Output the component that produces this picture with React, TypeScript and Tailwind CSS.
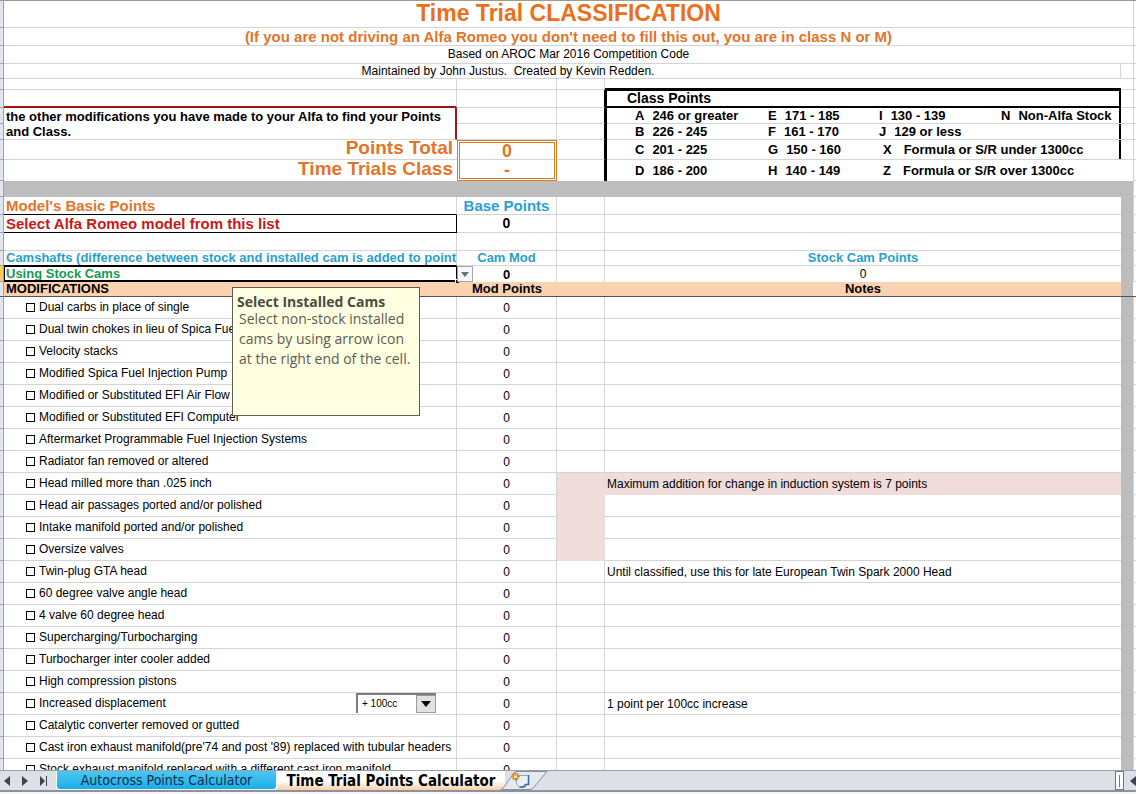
import { useState } from "react";
import type { ReactNode } from "react";

type Mod = { label: string; note?: string; tone?: "full" | "side" };

const mods: Mod[] = [
  { label: "Dual carbs in place of single" },
  { label: "Dual twin chokes in lieu of Spica Fuel Injection" },
  { label: "Velocity stacks" },
  { label: "Modified Spica Fuel Injection Pump" },
  { label: "Modified or Substituted EFI Air Flow Meter" },
  { label: "Modified or Substituted EFI Computer" },
  { label: "Aftermarket Programmable Fuel Injection Systems" },
  { label: "Radiator fan removed or altered" },
  { label: "Head milled more than .025 inch", note: "Maximum addition for change in induction system is 7 points", tone: "full" },
  { label: "Head air passages ported and/or polished", tone: "side" },
  { label: "Intake manifold ported and/or polished", tone: "side" },
  { label: "Oversize valves", tone: "side" },
  { label: "Twin-plug GTA head", note: "Until classified, use this for late European Twin Spark 2000 Head" },
  { label: "60 degree valve angle head" },
  { label: "4 valve 60 degree head" },
  { label: "Supercharging/Turbocharging" },
  { label: "Turbocharger inter cooler added" },
  { label: "High compression pistons" },
  { label: "Increased displacement", note: "1 point per 100cc increase" },
  { label: "Catalytic converter removed or gutted" },
  { label: "Cast iron exhaust manifold(pre'74 and post '89) replaced with tubular headers" },
  { label: "Stock exhaust manifold replaced with a different cast iron manifold" },
];

const classRows = [
  { height: "h-4 border-b", cells: [["A", "246 or greater"], ["E", "171 - 185"], ["I", "130 - 139"], ["N", "Non-Alfa Stock"]] },
  { height: "h-4 border-b", cells: [["B", "226 - 245"], ["F", "161 - 170"], ["J", "129 or less"]] },
  { height: "h-5 border-b", cells: [["C", "201 - 225"], ["G", "150 - 160"], ["X", "Formula or S/R under 1300cc"]] },
  { height: "h-[21px]", cells: [["D", "186 - 200"], ["H", "140 - 149"], ["Z", "Formula or S/R over 1300cc"]] },
];

const line = "border-[#d4d4d4]";
const cell = "border-b border-r border-[#d4d4d4] p-0";

function Row({ height, active, tail = "plain", children }: { height: string; active?: boolean; tail?: "plain" | "gray" | "none"; children?: ReactNode }) {
  return (
    <tr className={height}>
      <th className={`border-b border-r border-[#9aa3af] p-0 ${active ? "bg-[#fbcf5c]" : "bg-[#e1e6ee]"}`} />
      {children}
      {tail === "plain" && <td className={`border-b ${line} p-0`} />}
      {tail === "gray" && <td className="bg-[#bdbdbd] p-0" />}
      {tail === "none" && <td className="p-0" />}
      <td className={`border-b border-l ${line} p-0`} />
    </tr>
  );
}

function ClassPoints() {
  return (
    <div className="border-l-2 border-t border-black font-bold">
      <div className="h-[17px] border-b-2 border-r-2 border-black pl-5 text-sm leading-[15px]">Class Points</div>
      {classRows.map((row, i) => (
        <div
          key={row.cells[0][0]}
          className={`grid grid-cols-[133px_111px_122px_1fr] items-center whitespace-nowrap border-[#d4d4d4] pl-7 text-[13px] leading-[15px] ${row.height} ${i < 3 ? "shadow-[inset_-2px_0_0_#000]" : ""}`}
        >
          {row.cells.map(([letter, range]) => (
            <span key={letter} className={`flex ${letter === "X" || letter === "Z" ? "gap-3 pl-1" : "gap-2"}`}>
              <span>{letter}</span>
              <span>{range}</span>
            </span>
          ))}
        </div>
      ))}
    </div>
  );
}

function CamCell() {
  return (
    <td className="relative p-0">
      <select
        aria-label="Installed cams"
        className="block h-4 w-full appearance-none border border-b-2 border-black bg-white pl-px text-[13px] font-bold leading-[13px] text-[#159a52] outline-none"
      >
        <option>Using Stock Cams</option>
      </select>
      <span className="absolute -bottom-px -right-0.5 size-1 border-l border-t border-white bg-black" />
      <button
        type="button"
        aria-label="Open cam list"
        className="absolute -right-4 top-0 flex h-4 w-4 items-center justify-center border border-[#a3a9b3] bg-[#f6f7f9]"
      >
        <svg viewBox="0 0 8 5" className="h-[5px] w-2" fill="#6b6f76"><path d="M0 0h8L4 5z" /></svg>
      </button>
      <div role="tooltip" className="absolute left-[228px] top-[21px] z-10 h-[129px] w-[188px] border border-[#5f5f52] bg-[#ffffe1] pl-1 pt-1.5 font-['Open_Sans','Noto_Sans',sans-serif] text-sm text-[#5c5c52]">
        <p className="font-bold leading-[15px] text-[#4a4a42]">Select Installed Cams</p>
        <p className="whitespace-nowrap pl-0.5 leading-5">
          Select non-stock installed
          <br />
          cams by using arrow icon
          <br />
          at the right end of the cell.
        </p>
      </div>
    </td>
  );
}

function ModRow({ mod, index }: { mod: Mod; index: number }) {
  const [checked, setChecked] = useState(false);
  const id = `mod-${index}`;
  return (
    <Row height="h-[22px]" tail="gray">
      <td className={cell}>
        <div className="flex h-[21px] items-center whitespace-nowrap pb-px pl-[22px] text-xs">
          <input
            id={id}
            type="checkbox"
            checked={checked}
            onChange={(e) => setChecked(e.target.checked)}
            className="mr-1 size-[9px] shrink-0 appearance-none border border-black checked:bg-black"
          />
          <label htmlFor={id} className="grow">{mod.label}</label>
          {mod.label === "Increased displacement" && (
            <span className="mr-5 flex h-5 w-20 border-l-2 border-t-2 border-[#7d7d7d]">
              <select aria-label="Displacement increase" className="min-w-0 grow appearance-none bg-white pl-1 text-[10px] leading-4 outline-none">
                <option>+ 100cc</option>
              </select>
              <span className="flex w-5 items-center justify-center border border-[#9a9a9a] bg-[#e2e2e2]">
                <svg viewBox="0 0 10 6" className="h-1.5 w-2.5"><path d="M0 0h10L5 6z" /></svg>
              </span>
            </span>
          )}
        </div>
      </td>
      <td className={`${cell} text-center text-xs`}>0</td>
      <td className={mod.tone ? "bg-[#f0dcdb] p-0" : cell} />
      <td className={`whitespace-nowrap border-b p-0 pl-0.5 text-xs ${mod.tone === "full" ? "border-[#f0dcdb] bg-[#f0dcdb]" : line}`}>{mod.note}</td>
    </Row>
  );
}

function SheetTabs() {
  return (
    <footer className="flex h-6 shrink-0 flex-col bg-[#f4f6f8] font-['DejaVu_Sans_Condensed','DejaVu_Sans',sans-serif]">
      <div className="flex h-[22px] border-b-2 border-t border-b-[#8c939e] border-t-[#9b9fa6] bg-[#dce1e7]">
        <nav className="flex w-14 items-center gap-3 pl-1 text-[#3e434b]">
          <button type="button" aria-label="Previous sheet"><svg viewBox="0 0 6 10" className="h-2.5 w-1.5" fill="currentColor"><path d="M6 0v10L0 5z" /></svg></button>
          <button type="button" aria-label="Next sheet"><svg viewBox="0 0 6 10" className="h-2.5 w-1.5" fill="currentColor"><path d="M0 0v10l6-5z" /></svg></button>
          <button type="button" aria-label="Last sheet"><svg viewBox="0 0 8 10" className="h-2.5 w-2" fill="currentColor"><path d="M0 0v10l5-5zM6 0h1v10H6z" /></svg></button>
        </nav>
        <button type="button" className="w-[221px] rounded-b-sm border border-t-0 border-white bg-linear-to-b from-[#4cc6f2] to-[#12aeea] text-sm leading-[18px] text-[#0d2f45]">
          Autocross Points Calculator
        </button>
        <button type="button" className="w-[228px] bg-linear-to-b from-white via-white to-[#f9cfaa] text-[15px] font-bold leading-[18px] text-black">
          Time Trial Points Calculator
        </button>
        <button type="button" aria-label="Insert worksheet" className="-ml-1">
          <svg viewBox="0 0 48 19" className="h-[19px] w-12">
            <path d="M0 18.500L3 16L13 2Q14 .5 16 .5H46L33 16Q31 18.500 29 18.500z" fill="#e6eaef" stroke="#8b9099" />
            <path d="M15.500 4.500h12v9h-3v2.500h-6l-3-3z" fill="#eaf1fb" stroke="#8aa3cc" />
            <path d="M27.500 4v9.500h-3l-2 2.500h-4" fill="none" stroke="#3f63a3" strokeWidth="1.500" />
            <path d="M14.500 1v9M10 5.500h9M11.500 2.500l6 6M17.500 2.500l-6 6" stroke="#d58a1c" strokeWidth="1.500" />
            <circle cx="14.500" cy="5.500" r="1.500" fill="#fff1b0" />
          </svg>
        </button>
        <div className="ml-auto flex items-center">
          <span className="flex h-[19px] w-[9px] items-center justify-center border border-[#777] bg-white"><span className="h-3 w-px bg-[#777]" /></span>
          <button type="button" aria-label="Scroll left" className="ml-1.5"><svg viewBox="0 0 6 10" className="h-2.5 w-1.5" fill="#3e434b"><path d="M6 0v10L0 5z" /></svg></button>
        </div>
      </div>
    </footer>
  );
}

export default function App() {
  return (
    <div className="flex h-screen flex-col overflow-hidden bg-white font-['Liberation_Sans',Arial,sans-serif] text-black">
      <main className="min-h-0 grow overflow-hidden border-t border-[#a09a8c]">
        <table className="w-full table-fixed border-separate border-spacing-0">
          <colgroup>
            <col className="w-1" />
            <col className="w-[453px]" />
            <col className="w-[100px]" />
            <col className="w-12" />
            <col />
            <col className="w-3" />
            <col className="w-[3px]" />
          </colgroup>
          <tbody>
            <Row height="h-[27px]">
              <td colSpan={4} className={`border-b ${line} p-0 pb-0.5 pl-3 text-center text-[23px] font-bold leading-[22px] text-[#ea7019]`}>Time Trial CLASSIFICATION</td>
            </Row>
            <Row height="h-[18px]">
              <td colSpan={4} className={`border-b ${line} p-0 pl-3 text-center text-[15px] font-bold leading-[17px] text-[#e2752a]`}>
                (If you are not driving an Alfa Romeo you don't need to fill this out, you are in class N or M)
              </td>
            </Row>
            <Row height="h-[18px]">
              <td colSpan={4} className={`border-b ${line} p-0 pl-3 text-center text-xs leading-[17px]`}>Based on AROC Mar 2016 Competition Code</td>
            </Row>
            <Row height="h-[15px]">
              <td colSpan={4} className={`border-b border-r ${line} whitespace-pre p-0 pr-[108px] text-center text-xs leading-[14px]`}>Maintained by John Justus.  Created by Kevin Redden.</td>
            </Row>
            <Row height="h-[11px]">
              <td className={cell} />
              <td className={cell} />
              <td className={cell} />
              <td className="border-b-2 border-black p-0" />
            </Row>
            <Row height="h-[18px]">
              <td className="border-b-2 border-r border-b-[#a31515] border-r-[#d4d4d4] p-0" />
              <td className={cell} />
              <td className="border-b border-r border-b-[#d4d4d4] border-r-black p-0" />
              <td rowSpan={5} className="p-0 align-top"><ClassPoints /></td>
            </Row>
            <Row height="h-4">
              <td rowSpan={2} className="border-b border-r-2 border-b-[#d4d4d4] border-r-[#a31515] p-0 pl-0.5 text-[13px] font-bold leading-[15px]">
                the other modifications you have made to your Alfa to find your Points
                <br />
                and Class.
              </td>
              <td className={cell} />
              <td className="border-b border-r border-b-[#d4d4d4] border-r-black p-0" />
            </Row>
            <Row height="h-4">
              <td className={cell} />
              <td className="border-b border-r border-b-[#d4d4d4] border-r-black p-0" />
            </Row>
            <Row height="h-5">
              <td className={`border-b ${line} p-0 pb-1 pr-1 text-right text-[19px] font-bold leading-[15px] text-[#e2752a]`}>Points Total</td>
              <td rowSpan={2} className="border-[3px] border-double border-[#d57a22] p-0 text-center text-lg font-bold leading-4 text-[#e2752a]">
                <div className={`border-b ${line}`}>0</div>
                <div className="pt-0.5">-</div>
              </td>
              <td className="border-b border-r border-b-[#d4d4d4] border-r-black p-0" />
            </Row>
            <Row height="h-[21px]" tail="none">
              <td className="p-0 pr-1 pb-1 text-right text-[19px] font-bold leading-4 text-[#e2752a]">Time Trials Class</td>
              <td className="border-r border-black p-0" />
            </Row>
            <Row height="h-4" tail="gray">
              <td colSpan={4} className="bg-[#bdbdbd] p-0" />
            </Row>
            <Row height="h-[18px]" tail="gray">
              <td className="border-b border-r border-b-black border-r-[#d4d4d4] p-0 pl-0.5 text-[15px] font-bold leading-[17px] text-[#e2752a]">Model's Basic Points</td>
              <td className={`${cell} text-center text-[15px] font-bold leading-[17px] text-[#2a9fd0]`}>Base Points</td>
              <td className={cell} />
              <td className={`border-b ${line} p-0`} />
            </Row>
            <Row height="h-[18px]" tail="gray">
              <td className="border-b border-r border-black p-0">
                <select aria-label="Alfa Romeo model" className="block h-[17px] w-full appearance-none bg-white pl-0.5 text-[15px] font-bold leading-[17px] text-[#cc1719] outline-none">
                  <option>Select Alfa Romeo model from this list</option>
                </select>
              </td>
              <td className={`${cell} text-center text-sm font-bold leading-[17px]`}>0</td>
              <td className={cell} />
              <td className={`border-b ${line} p-0`} />
            </Row>
            <Row height="h-[18px]" tail="gray">
              <td className={cell} />
              <td className={cell} />
              <td className={cell} />
              <td className={`border-b ${line} p-0`} />
            </Row>
            <Row height="h-[15px]" tail="gray">
              <td className="whitespace-nowrap border-b border-r border-b-black border-r-[#d4d4d4] p-0 pl-0.5 text-[13px] font-bold leading-[14px] text-[#2a9fc8]">
                Camshafts (difference between stock and installed cam is added to point
              </td>
              <td className={`${cell} text-center text-[13px] font-bold leading-[14px] text-[#2a9fc8]`}>Cam Mod</td>
              <td className={cell} />
              <td className={`border-b ${line} p-0 text-center text-[13px] font-bold leading-[14px] text-[#2a9fc8]`}>Stock Cam Points</td>
            </Row>
            <Row height="h-4" active tail="gray">
              <CamCell />
              <td className={`border-r ${line} p-0 text-center text-[13px] font-bold leading-[15px]`}>0</td>
              <td className={`border-r ${line} p-0`} />
              <td className="p-0 text-center text-xs leading-[15px]">0</td>
            </Row>
            <tr className="h-[15px] bg-[#fad2b0] text-[13px] leading-[14px]">
              <th className="border-b border-r border-b-[#555] border-r-[#9aa3af] bg-[#e1e6ee] p-0" />
              <th scope="col" className="border-b border-[#555] p-0 pl-0.5 text-left">MODIFICATIONS</th>
              <th scope="col" className="border-b border-[#555] p-0">Mod Points</th>
              <th className="border-b border-[#555] p-0" />
              <th scope="col" className="border-b border-[#555] p-0">Notes</th>
              <th className="border-b border-[#555] bg-[#bdbdbd] p-0" />
              <th className="border-b border-[#555] bg-white p-0" />
            </tr>
            {mods.map((mod, i) => (
              <ModRow key={mod.label} mod={mod} index={i} />
            ))}
          </tbody>
        </table>
      </main>
      <SheetTabs />
    </div>
  );
}
